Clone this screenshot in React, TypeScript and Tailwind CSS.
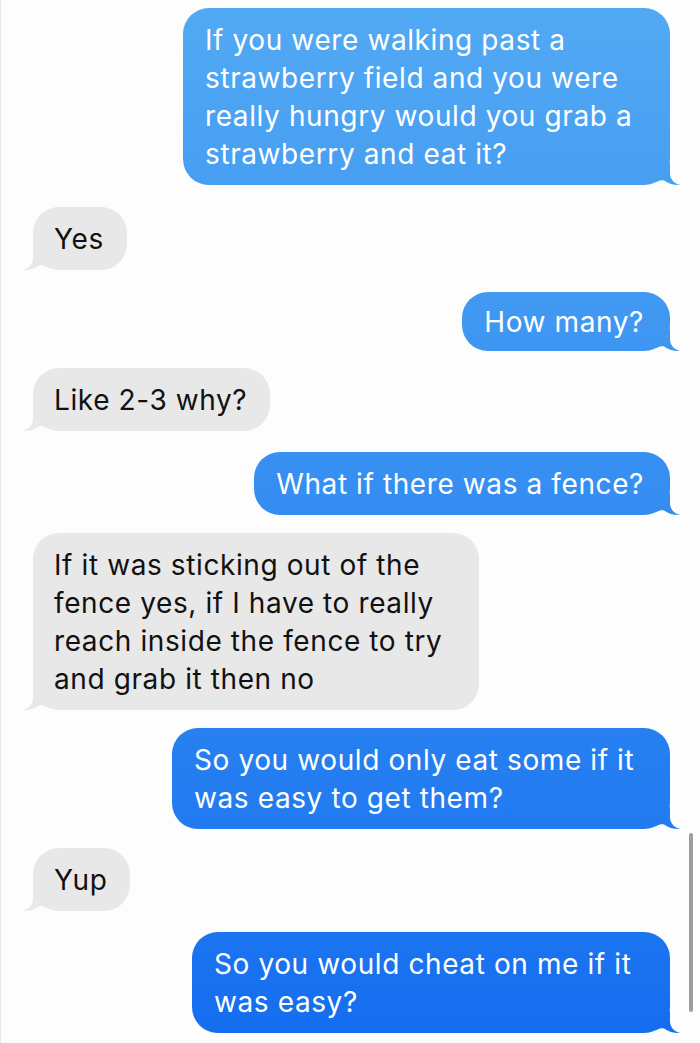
import React from "react";

const BLUE =
  "bg-fixed bg-linear-to-b from-[#52a9f3] to-[#146def]";

function Sent({
  children,
  mt,
  w,
  pad = "pt-[13px] pb-[12px]",
}: {
  children: React.ReactNode;
  mt: string;
  w?: string;
  pad?: string;
}) {
  return (
    <div className={`self-end mr-[30px] relative ${mt}`}>
      <div
        className={`relative rounded-[26px] ${BLUE} text-white pl-[22px] pr-[26px] ${pad} whitespace-nowrap ${w ?? ""}`}
      >
        {children}
        <div
          className={`absolute bottom-0 right-[-10px] w-[24px] h-[22px] ${BLUE} [clip-path:path('M14_0L14_10C14_16_18_20.5_24_22C19_22.5_13_21_8_17.5C6_17_3_17.5_0_19L0_0Z')]`}
        />
      </div>
    </div>
  );
}

function Received({
  children,
  mt,
  w,
}: {
  children: React.ReactNode;
  mt: string;
  w?: string;
}) {
  return (
    <div className={`self-start ml-[32px] relative ${mt}`}>
      <div
        className={`relative rounded-[26px] bg-[#e8e8e9] text-[#111111] pl-[21px] pr-[23px] pt-[13px] pb-[12px] whitespace-nowrap ${w ?? ""}`}
      >
        {children}
        <div className="absolute bottom-0 left-[-10px] w-[24px] h-[22px] bg-[#e8e8e9] [clip-path:path('M10_0L10_10C10_16_6_20.5_0_22C5_22.5_11_21_16_17.5C18_17_21_17.5_24_19L24_0Z')]" />
      </div>
    </div>
  );
}

export default function App() {
  return (
    <div className="relative w-[700px] h-[1043px] overflow-hidden bg-[#fdfdfd] border-l border-[#e9e9e9] flex flex-col pt-[8px] font-[Inter,'Liberation_Sans',sans-serif] text-[28px] leading-[38px] tracking-[0.6px]">
      <Sent mt="mt-0" w="w-[487px]">
        If you were walking past a
        <br />
        strawberry field and you were
        <br />
        really hungry would you grab a
        <br />
        strawberry and eat it?
      </Sent>

      <Received mt="mt-[22px]">Yes</Received>

      <Sent mt="mt-[22px]" pad="pt-[11px] pb-[10px]">
        How many?
      </Sent>

      <Received mt="mt-[17px]">Like 2-3 why?</Received>

      <Sent mt="mt-[21px]">What if there was a fence?</Sent>

      <Received mt="mt-[18px]" w="w-[446px]">
        If it was sticking out of the
        <br />
        fence yes, if I have to really
        <br />
        reach inside the fence to try
        <br />
        and grab it then no
      </Received>

      <Sent mt="mt-[18px]" w="w-[498px]">
        So you would only eat some if it
        <br />
        was easy to get them?
      </Sent>

      <Received mt="mt-[19px]">Yup</Received>

      <Sent mt="mt-[21px]" w="w-[478px]">
        So you would cheat on me if it
        <br />
        was easy?
      </Sent>

      <div className="absolute left-[688px] top-[833px] w-[4px] h-[179px] rounded-full bg-[#9d9d9d]" />
    </div>
  );
}
